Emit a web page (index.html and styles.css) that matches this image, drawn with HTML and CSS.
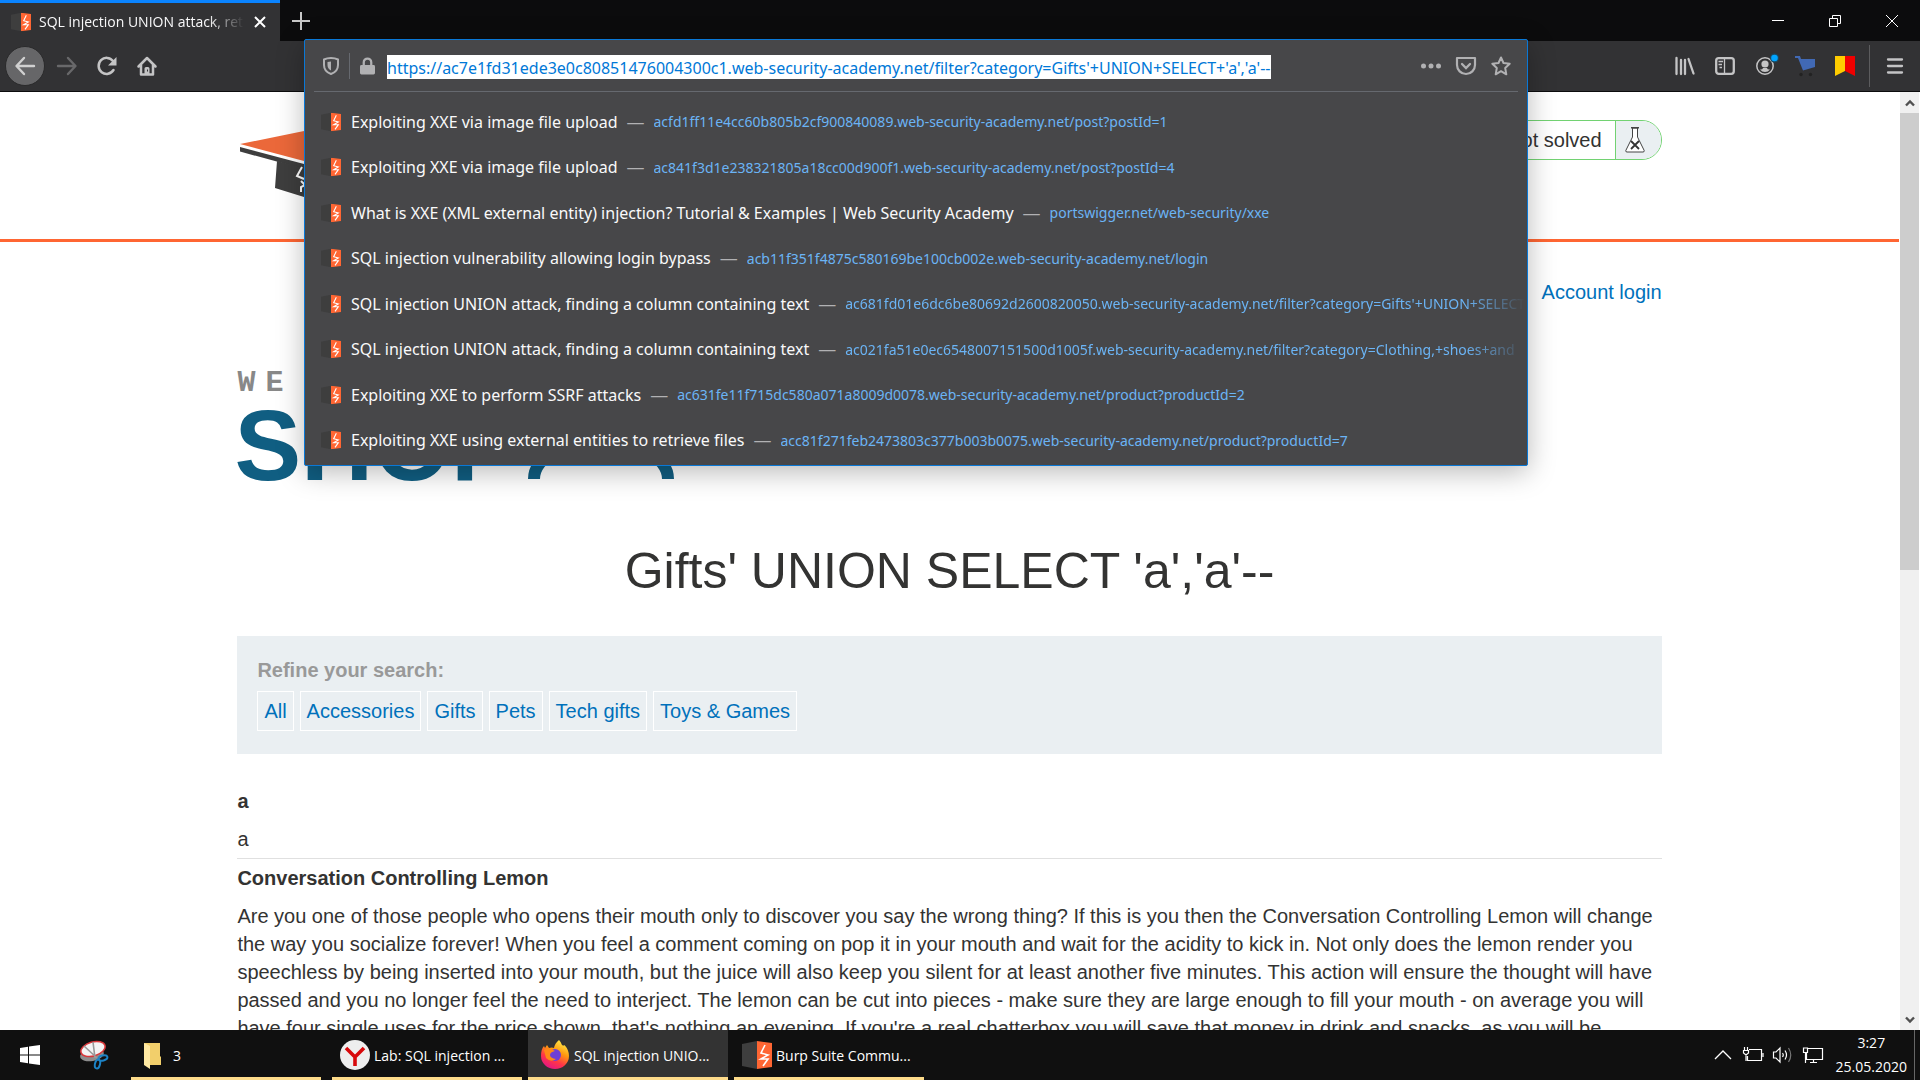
FILE: index.html
```html
<!DOCTYPE html>
<html lang="en">
<head>
<meta charset="utf-8">
<title>SQL injection UNION attack</title>
<link rel="stylesheet" href="styles.css">
</head>
<body>
<svg class="defs" aria-hidden="true">
  <symbol id="burp" viewBox="0 0 30 28">
    <path d="M0 3 15 0V28L0 25Z" fill="#3e3e3e"/>
    <path d="M15 0 30 2V26L15 28Z" fill="#ff6633"/>
    <path d="M23 4 19 12 26 14 19 18H26L21 25" fill="none" stroke="#fff" stroke-width="1.6"/>
  </symbol>
</svg>

<header class="titlebar">
  <div class="tab">
    <svg class="favicon" viewBox="0 0 30 28"><use href="#burp"/></svg>
    <span class="tab-title">SQL injection UNION attack, retrieving</span>
    <button class="tab-close" aria-label="Close tab"><svg viewBox="0 0 12 12"><path d="M1 1 11 11M11 1 1 11" stroke="#fff" stroke-width="2"/></svg></button>
  </div>
  <button class="tab-new" aria-label="New tab"><svg viewBox="0 0 18 18"><path d="M9 0V18M0 9H18" stroke="#c8c8c8" stroke-width="2"/></svg></button>
  <div class="window-controls">
    <button aria-label="Minimize"><svg viewBox="0 0 12 12"><path d="M0 5.500H12" stroke="#fff"/></svg></button>
    <button aria-label="Restore"><svg viewBox="0 0 12 12"><path d="M.5 3.500H8.500V11.500H.5ZM3.500 3V.5H11.500V8.500H9" fill="none" stroke="#fff"/></svg></button>
    <button aria-label="Close"><svg viewBox="0 0 12 12"><path d="M0 0 12 12M12 0 0 12" stroke="#fff"/></svg></button>
  </div>
</header>

<nav class="toolbar">
  <div class="nav-buttons">
    <button class="back" aria-label="Back"><svg viewBox="0 0 20 20"><path d="M19 10H2M9 2 1.500 10 9 18" fill="none" stroke="#d0d0d0" stroke-width="2.400" stroke-linecap="round" stroke-linejoin="round"/></svg></button>
    <button aria-label="Forward"><svg viewBox="0 0 20 20"><path d="M1 10H18M11 2 18.500 10 11 18" fill="none" stroke="#68686a" stroke-width="2.400" stroke-linecap="round" stroke-linejoin="round"/></svg></button>
    <button aria-label="Reload"><svg viewBox="0 0 20 20"><path d="M16.500 14A8 8 0 1 1 16 5" fill="none" stroke="#c4c4c5" stroke-width="2.500" stroke-linecap="round"/><path d="M19.500 1V9.500H11Z" fill="#c4c4c5"/></svg></button>
    <button aria-label="Home"><svg viewBox="0 0 20 20"><path d="M1.500 10.500 10 2 18.500 10.500M4 9V18.500H16V9" fill="none" stroke="#c4c4c5" stroke-width="2.500" stroke-linecap="round" stroke-linejoin="round"/><path d="M7.500 18V12.500A1.500 1.500 0 0 1 9 11H11A1.500 1.500 0 0 1 12.500 12.500V18Z" fill="#c4c4c5"/><path d="M10.500 13.500V15.500" stroke="#323234"/></svg></button>
  </div>
  <div class="tools">
    <button aria-label="Library"><svg viewBox="0 0 20 20"><path d="M1.500 2V18M6 4V18M10 4V18M13.500 3 18.500 17.500" stroke="#c4c4c5" stroke-width="2.300" stroke-linecap="round"/></svg></button>
    <button aria-label="Sidebars"><svg viewBox="0 0 20 20"><rect x="1.200" y="2.200" width="17.600" height="15.600" rx="2.500" fill="none" stroke="#c4c4c5" stroke-width="2.300"/><path d="M9.500 2V18M3.500 5.500H8M3.500 8.500H7M4.500 11.500H7" stroke="#c4c4c5" stroke-width="1.300"/></svg></button>
    <button aria-label="Account"><svg viewBox="0 0 20 20"><circle cx="10" cy="10" r="8.200" fill="none" stroke="#c4c4c5" stroke-width="1.500"/><circle cx="10" cy="8" r="3.600" fill="#c4c4c5"/><path d="M5 13.500Q7.500 14 8 12H12Q12.500 14 15 13.500Q13 16 10 16T5 13.500Z" fill="#c4c4c5"/><circle cx="19.500" cy="2" r="4.500" fill="#1b4a63"/><circle cx="19.500" cy="2" r="3.300" fill="#00a4ff"/></svg></button>
    <button aria-label="Cart"><svg viewBox="0 0 20 20"><path d="M0 0H5L6 3H20V11L8 14.500 3 2H0Z" fill="#4169b4"/><circle cx="6" cy="18.500" r="1.700" fill="#222"/><circle cx="15.500" cy="18.500" r="1.700" fill="#222"/></svg></button>
    <button aria-label="Visual bookmarks"><svg viewBox="0 0 20 20"><path d="M0 0H10V15L0 20Z" fill="#ffcc00"/><path d="M10 0H20V20L10 15Z" fill="#f00000"/></svg></button>
    <button class="menu" aria-label="Menu"><svg viewBox="0 0 20 20"><path d="M3 3.500H17M3 10H17M3 16.500H17" stroke="#c4c4c5" stroke-width="2.300" stroke-linecap="round"/></svg></button>
  </div>

  <div class="urlbar">
    <div class="urlbar-field">
      <svg class="shield" viewBox="0 0 16 18"><path d="M8 1Q12 1 15 2.500V8Q15 14.500 8 17Q1 14.500 1 8V2.500Q4 1 8 1Z" fill="none" stroke="#b1b1b3" stroke-width="2"/><path d="M8 4.500V13.500Q4.500 11.500 4.500 8V5Z" fill="#b1b1b3"/></svg>
      <svg class="lock" viewBox="0 0 16 18"><rect y="8" width="16" height="10" rx="1.500" fill="#b1b1b3"/><path d="M4 9V5A4 4 0 0 1 12 5V9" fill="none" stroke="#b1b1b3" stroke-width="2.400"/></svg>
      <input class="url" type="text" aria-label="Address" value="https://ac7e1fd31ede3e0c80851476004300c1.web-security-academy.net/filter?category=Gifts'+UNION+SELECT+'a','a'--">
      <div class="url-actions">
        <button aria-label="Page actions"><svg viewBox="0 0 20 20"><g fill="#b1b1b3"><circle cx="2.500" cy="10" r="2.500"/><circle cx="10" cy="10" r="2.500"/><circle cx="17.500" cy="10" r="2.500"/></g></svg></button>
        <button aria-label="Save to Pocket"><svg viewBox="0 0 20 20"><path d="M1 2H19V9A9 9 0 0 1 1 9Z" fill="none" stroke="#b1b1b3" stroke-width="2.200" stroke-linejoin="round"/><path d="M6 8 10 12 14 8" fill="none" stroke="#b1b1b3" stroke-width="2.300" stroke-linecap="round"/></svg></button>
        <button aria-label="Bookmark"><svg viewBox="0 0 20 20"><path d="M10 1.500 12.500 7 18.700 7.700 14.200 12 15.300 18.300 10 15.200 4.700 18.300 5.800 12 1.300 7.700 7.500 7Z" fill="none" stroke="#b1b1b3" stroke-width="2" stroke-linejoin="round"/></svg></button>
      </div>
    </div>
    <ul class="results">
      <li><a href="#"><svg class="favicon" viewBox="0 0 30 28"><use href="#burp"/></svg><span class="title">Exploiting XXE via image file upload</span><span class="dash">—</span><span class="link">acfd1ff11e4cc60b805b2cf900840089.web-security-academy.net/post?postId=1</span></a></li>
      <li><a href="#"><svg class="favicon" viewBox="0 0 30 28"><use href="#burp"/></svg><span class="title">Exploiting XXE via image file upload</span><span class="dash">—</span><span class="link">ac841f3d1e238321805a18cc00d900f1.web-security-academy.net/post?postId=4</span></a></li>
      <li><a href="#"><svg class="favicon" viewBox="0 0 30 28"><use href="#burp"/></svg><span class="title">What is XXE (XML external entity) injection? Tutorial &amp; Examples | Web Security Academy</span><span class="dash">—</span><span class="link">portswigger.net/web-security/xxe</span></a></li>
      <li><a href="#"><svg class="favicon" viewBox="0 0 30 28"><use href="#burp"/></svg><span class="title">SQL injection vulnerability allowing login bypass</span><span class="dash">—</span><span class="link">acb11f351f4875c580169be100cb002e.web-security-academy.net/login</span></a></li>
      <li><a href="#"><svg class="favicon" viewBox="0 0 30 28"><use href="#burp"/></svg><span class="title">SQL injection UNION attack, finding a column containing text</span><span class="dash">—</span><span class="link fade">ac681fd01e6dc6be80692d2600820050.web-security-academy.net/filter?category=Gifts'+UNION+SELECT</span></a></li>
      <li><a href="#"><svg class="favicon" viewBox="0 0 30 28"><use href="#burp"/></svg><span class="title">SQL injection UNION attack, finding a column containing text</span><span class="dash">—</span><span class="link fade">ac021fa51e0ec6548007151500d1005f.web-security-academy.net/filter?category=Clothing,+shoes+and</span></a></li>
      <li><a href="#"><svg class="favicon" viewBox="0 0 30 28"><use href="#burp"/></svg><span class="title">Exploiting XXE to perform SSRF attacks</span><span class="dash">—</span><span class="link">ac631fe11f715dc580a071a8009d0078.web-security-academy.net/product?productId=2</span></a></li>
      <li><a href="#"><svg class="favicon" viewBox="0 0 30 28"><use href="#burp"/></svg><span class="title">Exploiting XXE using external entities to retrieve files</span><span class="dash">—</span><span class="link">acc81f271feb2473803c377b003b0075.web-security-academy.net/product?productId=7</span></a></li>
    </ul>
  </div>
</nav>

<div class="viewport">
  <main class="page">
    <header class="lab-header">
      <div class="container lab-row">
        <svg class="academy" viewBox="0 0 128 66"><path d="M0 13 64 0 128 13 64 30Z" fill="#eb683a"/><path d="M0 16 64 33V38L0 20.500Z" fill="#3e3e3e"/><path d="M37 30 64 37 91 30 93 57 64 66 35 57Z" fill="#3e3e3e"/><path d="M62 36 57 45 64 48M61 50 65 54 61 56V61" fill="none" stroke="#fff" stroke-width="2"/></svg>
        <div class="lab-status"><span class="lab-text">Not solved</span><span class="flask"><svg viewBox="0 0 20 26"><path d="M7.500 1V10L.8 23.500Q.5 25 2 25H18Q19.500 25 19.200 23.500L12.500 10V1Z" fill="#fff" stroke="#444"/><path d="M6 .8H14" stroke="#444" stroke-width="1.600"/><path d="M6 14 14 22M14 14 6 22" stroke="#333" stroke-width="1.800"/></svg></span></div>
      </div>
    </header>
    <div class="container">
      <div class="account"><a href="#">Account login</a></div>
      <div class="shop-logo">
        <div class="tagline"><span>W</span><span>E</span></div>
        <div class="shop"><span>SHOP</span><svg viewBox="0 0 146 70"><path d="M6 70C6 48 40 30 73 30S140 48 140 70" fill="none" stroke="#105e82" stroke-width="12"/></svg></div>
      </div>
      <h1>Gifts' UNION SELECT 'a','a'--</h1>
      <section class="filters">
        <h2>Refine your search:</h2>
        <div class="filter-list"><a href="#">All</a><a href="#">Accessories</a><a href="#">Gifts</a><a href="#">Pets</a><a href="#">Tech gifts</a><a href="#">Toys &amp; Games</a></div>
      </section>
      <article><h3>a</h3><p>a</p></article>
      <article><h3>Conversation Controlling Lemon</h3><p>Are you one of those people who opens their mouth only to discover you say the wrong thing? If this is you then the Conversation Controlling Lemon will change the way you socialize forever! When you feel a comment coming on pop it in your mouth and wait for the acidity to kick in. Not only does the lemon render you speechless by being inserted into your mouth, but the juice will also keep you silent for at least another five minutes. This action will ensure the thought will have passed and you no longer feel the need to interject. The lemon can be cut into pieces - make sure they are large enough to fill your mouth - on average you will have four single uses for the price shown, that's nothing an evening. If you're a real chatterbox you will save that money in drink and snacks, as you will be</p></article>
    </div>
  </main>
  <div class="scrollbar">
    <button aria-label="Scroll up"><svg viewBox="0 0 10 8"><path d="M1 6.500 5 2.500 9 6.500" fill="none" stroke="#505050" stroke-width="2.400"/></svg></button>
    <div class="track"><div class="thumb"></div></div>
    <button aria-label="Scroll down"><svg viewBox="0 0 10 8"><path d="M1 1.500 5 5.500 9 1.500" fill="none" stroke="#505050" stroke-width="2.400"/></svg></button>
  </div>
</div>

<footer class="taskbar">
  <button class="start" aria-label="Start"><svg viewBox="0 0 20 20"><path d="M0 3 8 1.800V9.500H0ZM9 1.600 20 0V9.500H9ZM0 10.500H8V18.200L0 17ZM9 10.500H20V20L9 18.400Z" fill="#fff"/></svg></button>
  <button class="snip" aria-label="Snipping tool"><svg viewBox="0 0 28 28"><ellipse cx="12" cy="14" rx="12" ry="6" transform="rotate(-10 12 14)" fill="#8d8d8d"/><ellipse cx="13" cy="8" rx="12.500" ry="7" transform="rotate(-16 13 8)" fill="#f4f4f4" stroke="#d8373a" stroke-width="1.500"/><path d="M4 5 17 17M13 1 15 17" stroke="#999" stroke-width="1.600"/><g fill="none" stroke="#1c83c6" stroke-width="2"><ellipse cx="23" cy="17" rx="4.500" ry="2.500" transform="rotate(-15 23 17)"/><ellipse cx="17.500" cy="23" rx="2.500" ry="4.500" transform="rotate(15 17.500 23)"/></g></svg></button>
  <button class="task folder"><svg viewBox="0 0 30 30"><path d="M5 3H21V16L22 17V25H10Z" fill="#f2cf6b"/><path d="M5 3 11 6V29L5 25Z" fill="#ffe9a2"/></svg><span>3</span></button>
  <button class="task"><svg viewBox="0 0 30 30"><circle cx="15" cy="15" r="15" fill="#eee"/><path d="M6 8 15 17 24 8M15 16V26" fill="none" stroke="#d8090c" stroke-width="3.600"/></svg><span>Lab: SQL injection ...</span></button>
  <button class="task active"><svg viewBox="0 0 30 30"><defs><linearGradient id="fx" x1=".8" y1="0" x2=".3" y2="1"><stop offset="0" stop-color="#fff44f"/><stop offset=".4" stop-color="#ff980e"/><stop offset=".7" stop-color="#ff3647"/><stop offset="1" stop-color="#e31587"/></linearGradient></defs><path d="M19 0Q21 2 22 5Q24 6 24.500 5Q29 10 29 16A14 13 0 0 1 1 16Q1 9 4 6L5 8 7 5 9 8Q12 7 14 8Q15 3 19 0Z" fill="url(#fx)"/><circle cx="15" cy="15" r="6" fill="#6f3fd6"/><path d="M4 10Q9 7 15 11Q10 12 10 15T16 19Q11 23 6 18Z" fill="#ff8a16"/></svg><span>SQL injection UNIO...</span></button>
  <button class="task"><svg viewBox="0 0 30 30"><use href="#burp" y="1" width="30" height="28"/></svg><span>Burp Suite Commu...</span></button>
  <div class="tray">
    <svg viewBox="0 0 20 16"><path d="M2 12 10 4 18 12" fill="none" stroke="#fff" stroke-width="1.300"/></svg>
    <svg viewBox="0 0 20 16"><path d="M6 2.500H18.500V13.500H4.500V9M20 6V10M1.500 0V3M4.500 0V3M.5 3.500H5.500V6L3 8 .5 6ZM3 8V14" fill="none" stroke="#fff" stroke-width="1.200"/></svg>
    <svg viewBox="0 0 20 16"><path d="M.5 5H3L7 1V15L3 11H.5ZM9.500 6Q11 8 9.500 10M12 3.500Q15 8 12 12.500" fill="none" stroke="#fff" stroke-width="1.200"/><path d="M15.500 1Q20 8 15.500 15" fill="none" stroke="#777" stroke-width="1.200"/></svg>
    <svg viewBox="0 0 20 16"><path d="M5 1.500H19.500V12.500H3.500V6M.5 1H4.500V5.500H.5ZM2.500 6V16M10.500 13V15.500M7 15.500H14" fill="none" stroke="#fff" stroke-width="1.200"/></svg>
    <div class="clock"><span>3:27</span><span>25.05.2020</span></div>
  </div>
</footer>
</body>
</html>
```
FILE: styles.css
```css
* { box-sizing: border-box; }

body {
  margin: 0;
  height: 100vh;
  display: flex;
  flex-direction: column;
  overflow: hidden;
  background: #fff;
  font-family: "Open Sans", "Noto Sans", sans-serif;
}

button {
  display: flex;
  align-items: center;
  justify-content: center;
  padding: 0;
  border: 0;
  background: none;
  font: inherit;
  color: inherit;
}

a { text-decoration: none; }
svg { display: block; flex: none; overflow: visible; }
.defs { position: absolute; width: 0; height: 0; }
.favicon { width: 20px; height: 20px; }

/* Title bar */
.titlebar {
  flex: none;
  display: flex;
  height: 41px;
  background: #0c0c0d;
}

.tab {
  display: flex;
  align-items: center;
  width: 280px;
  padding: 0 12px 0 11px;
  gap: 8px;
  border-top: 3px solid #0a84ff;
  background: #323234;
  color: #f9f9fa;
}

.tab-title {
  flex: 1;
  overflow: hidden;
  font-size: 14px;
  line-height: 20px;
  white-space: nowrap;
  mask-image: linear-gradient(to left, transparent, #000 36px);
}

.tab-close { width: 16px; height: 16px; }
.tab-close svg { width: 12px; height: 12px; }
.tab-new { width: 42px; }
.tab-new svg { width: 18px; height: 18px; }

.window-controls { display: flex; margin-left: auto; }
.window-controls button { width: 57px; }
.window-controls svg { width: 12px; height: 12px; }

/* Toolbar */
.toolbar {
  flex: none;
  position: relative;
  display: flex;
  justify-content: space-between;
  height: 51px;
  border-bottom: 1px solid #0c0c0d;
  background: #323234;
}

.toolbar svg { width: 20px; height: 20px; }
.nav-buttons { display: flex; align-items: center; padding-left: 5px; }
.nav-buttons button { width: 40px; height: 40px; }
.nav-buttons .back {
  margin-right: 2px;
  border: 1px solid #2a2a2b;
  border-radius: 50%;
  background: #666668;
}

.tools { display: flex; align-items: center; }
.tools button { width: 40px; height: 42px; }
.tools .menu {
  width: 51px;
  margin-left: 4px;
  border-left: 1px solid #5c5c5e;
}

/* Open address bar with suggestions */
.urlbar {
  position: absolute;
  z-index: 1;
  top: -2px;
  left: 304px;
  right: 392px;
  border: 1px solid #0a78d6;
  border-radius: 2px;
  background: #474749;
  box-shadow: 0 6px 28px rgba(0, 0, 0, 0.28);
  font-family: "Noto Sans", "Open Sans", sans-serif;
}

.urlbar-field {
  display: flex;
  align-items: center;
  height: 52px;
  margin: 0 9px;
  padding: 0 7px 0 8px;
  border-bottom: 1px solid #66696f;
}

.toolbar .shield { width: 18px; height: 18px; }
.toolbar .lock {
  width: 36px;
  height: 26px;
  margin: 0 2px 0 9px;
  padding: 4px 10px;
  border-left: 1px solid #66696f;
}

.url {
  field-sizing: content;
  height: 24px;
  margin-top: 2px;
  padding: 2px 0 0;
  border: 0;
  background: #fff;
  color: #0078d7;
  font: 16px/22px "Noto Sans", "Open Sans", sans-serif;
}

.url-actions { display: flex; gap: 15px; margin-left: auto; }

.results {
  display: grid;
  grid-auto-rows: 1fr;
  height: 373px;
  margin: 0;
  padding: 7px 9px 2px 16px;
  list-style: none;
}

.results a {
  display: flex;
  align-items: center;
  height: 100%;
  white-space: nowrap;
}

.results .favicon { margin-right: 10px; }
.title { color: #f9f9fa; font-size: 16px; }
.dash { margin: 0 9px; color: #b1b1b3; font-size: 18px; }
.link { flex: 1; min-width: 0; overflow: hidden; color: #6bb4f5; font-size: 14px; }
.fade { mask-image: linear-gradient(to left, transparent, #000 60px); }

/* Web page */
.viewport {
  flex: 1;
  min-height: 0;
  display: flex;
}

.page {
  flex: 1;
  overflow: hidden;
  color: #333332;
  font: 20px/28px "Liberation Sans", Arial, sans-serif;
}

.page a { color: #0071bb; }
.container { width: 75%; margin: 0 auto; }

.lab-header {
  height: 150px;
  padding-top: 28px;
  border-bottom: 3px solid #ff6633;
}

.lab-row { display: flex; justify-content: space-between; align-items: flex-start; }
.academy { width: 128px; height: 66px; margin: 11px 0 0 3px; }

.lab-status {
  display: flex;
  height: 40px;
  overflow: hidden;
  border: 1px solid #72d272;
  border-radius: 20px;
}

.lab-text { padding: 5px 13px; }
.flask {
  display: flex;
  align-items: center;
  width: 46px;
  padding-left: 9px;
  border-left: 1px solid #72d272;
  background: #eaeff2;
}
.flask svg { width: 20px; height: 26px; }

.account { padding-top: 36px; text-align: right; }

.shop-logo { padding-top: 61px; }
.tagline {
  display: flex;
  gap: 10px;
  color: #888;
  font: bold 30px/32px "Liberation Mono", "Courier New", monospace;
}
.shop {
  display: flex;
  height: 95px;
  margin-left: -3px;
  color: #105e82;
  font: bold 100px/92px "Liberation Sans", Arial, sans-serif;
}
.shop svg { width: 146px; height: 70px; margin: 10px 0 0 10px; }

h1 {
  margin: 49px 0 37px;
  font-size: 50px;
  font-weight: normal;
  line-height: 56px;
  text-align: center;
}

.filters {
  height: 118px;
  margin-bottom: 28px;
  padding: 20px;
  background: #eaeff2;
}

.filters h2 {
  margin: 0 0 7px;
  color: #999;
  font-size: 20px;
  line-height: 28px;
}

.filter-list { display: flex; gap: 6px; }
.filter-list a {
  padding: 5px 6px;
  border: 1px solid #fff;
}

article { border-bottom: 1px solid #e0e0e0; }
article h3 { margin: 0; padding: 5px 0; font-size: 20px; line-height: 28px; }
article p { margin: 0; padding: 5px 0; }

/* Scroll bar */
.scrollbar {
  display: flex;
  flex-direction: column;
  width: 21px;
  border: solid #fff;
  border-width: 0 1px;
  background: #f0f0f0;
}
.scrollbar button { height: 21px; }
.scrollbar svg { width: 10px; height: 8px; }
.track { flex: 1; }
.thumb { height: 51%; background: #cdcdcd; }

/* Taskbar */
.taskbar {
  flex: none;
  display: flex;
  height: 50px;
  background: #101010;
  color: #fff;
  font-size: 14px;
}

.start { width: 60px; }
.start svg { width: 20px; height: 20px; }
.snip { width: 68px; }
.snip svg { width: 28px; height: 28px; }

.task {
  justify-content: flex-start;
  width: 190px;
  margin-left: 11px;
  padding-left: 8px;
  gap: 4px;
  border-bottom: 3px solid #fddb8a;
  border-top: 3px solid transparent;
  white-space: nowrap;
}
.task svg { width: 30px; height: 30px; }
.folder { margin-left: 3px; }
.active { width: 200px; margin: 0 -5px 0 6px; padding-left: 12px; background: #333; }

.tray {
  display: flex;
  align-items: center;
  gap: 10px;
  margin-left: auto;
  margin-right: 5px;
  border-right: 1px solid #666;
}
.tray svg { width: 20px; height: 16px; }
.clock {
  display: flex;
  flex-direction: column;
  padding: 0 7px 0 3px;
  line-height: 24px;
  text-align: center;
}
```
